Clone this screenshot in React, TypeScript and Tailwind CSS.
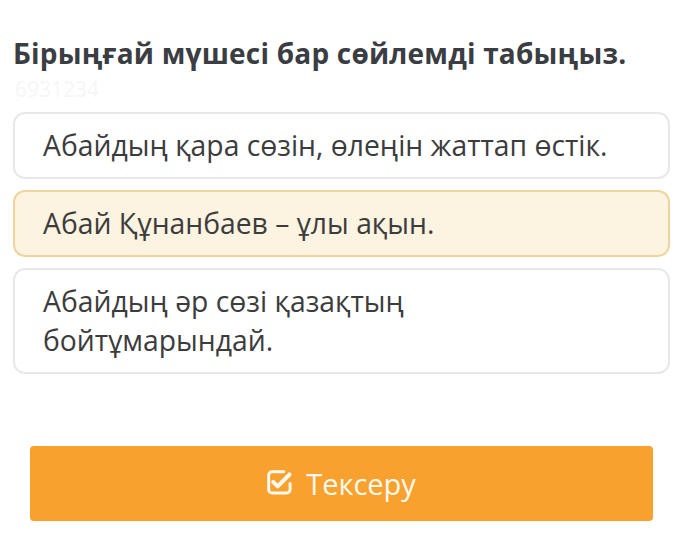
const options = [
  { text: ["Абайдың қара сөзін, өлеңін жаттап өстік."], selected: false },
  { text: ["Абай Құнанбаев – ұлы ақын."], selected: true },
  { text: ["Абайдың әр сөзі қазақтың", "бойтұмарындай."], selected: false },
]

export default function App() {
  return (
    <div className="w-[684px] h-[558px] bg-white font-['Open_Sans',sans-serif] pt-[36px]">
      <h1 className="pl-[13px] text-[28px] font-bold leading-[35px] tracking-[0.2px] text-[#3a3d42]">
        Бірыңғай мүшесі бар сөйлемді табыңыз.
      </h1>
      <div className="mt-[5px] pl-[15px] text-[21px] leading-[26px] text-[#f6f6f6] select-none">6931234</div>

      <div className="mt-[10px] flex flex-col gap-[11px] pl-[13px] pr-[14px]">
        {options.map((o) => (
          <div
            key={o.text[0]}
            className={
              o.selected
                ? "rounded-[12px] border-2 border-[#efd49c] bg-[#fcf3e1] px-[28px] py-[12px]"
                : "rounded-[12px] border-2 border-[#e8e8e8] bg-white px-[28px] py-[12px]"
            }
          >
            <p className="text-[28.3px] leading-[39px] text-[#3c3c3c]">
              {o.text.map((line) => (
                <span key={line} className="block">{line}</span>
              ))}
            </p>
          </div>
        ))}
      </div>

      <div className="mt-[72px] pl-[30px] pr-[31px]">
        <button className="flex h-[75px] w-full items-center justify-center gap-[12px] rounded-[4px] bg-[#f9a12e] text-[29px] text-[#fffaf0]">
          <svg width="27" height="27" viewBox="0 0 24 24" fill="none" stroke="currentColor" strokeLinecap="round" strokeLinejoin="round">
            <path d="M20.5 12v5.5a3 3 0 0 1-3 3h-13a3 3 0 0 1-3-3v-13a3 3 0 0 1 3-3H15" strokeWidth="2.6" />
            <path d="M5.5 10.5l4 4L20 4" strokeWidth="3.6" />
          </svg>
          <span>Тексеру</span>
        </button>
      </div>
    </div>
  )
}
